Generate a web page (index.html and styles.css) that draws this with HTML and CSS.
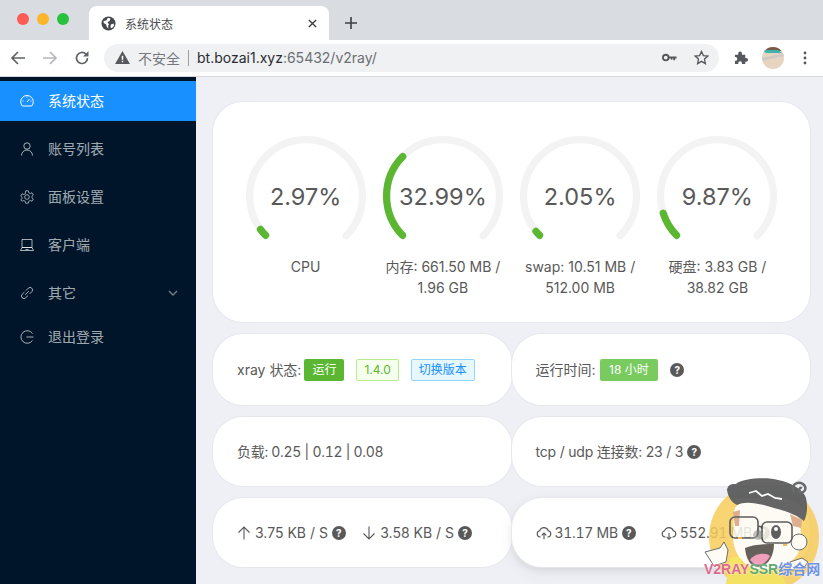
FILE: index.html
```html
<!DOCTYPE html>
<html lang="zh-CN">
<head>
    <meta charset="UTF-8">
    <meta name="viewport" content="width=device-width, initial-scale=1.0">
    <title>系统状态</title>
    <link rel="stylesheet" href="styles.css">
</head>
<body>
<div class="window">
    <div class="tab-strip">
        <div class="traffic">
            <span class="light red"></span>
            <span class="light yellow"></span>
            <span class="light green"></span>
        </div>
        <div class="tab">
            <svg class="favicon" viewBox="0 0 16 16"><circle cx="8" cy="8" r="7.5" fill="#45484c"/><path d="M2.5 5.5 6 4.5 7 2l3 .5-.5 2.5L7 6.500l1.500 2.500-1 1.500.5 3-2-2-.5-2.500L3 7.500zM10.500 9l3-1 .5 2.500-2.500 2.500-1.500-1z" fill="#fff"/></svg>
            <span class="tab-title">系统状态</span>
            <svg class="tab-close" viewBox="0 0 10 10"><path d="M1 1l8 8M9 1l-8 8" stroke="#3c4043" stroke-width="1.500"/></svg>
        </div>
        <svg class="new-tab" viewBox="0 0 12 12"><path d="M6 0v12M0 6h12" stroke="#3c4043" stroke-width="1.600"/></svg>
    </div>
    <div class="toolbar">
        <svg class="tool-icon" viewBox="0 0 16 16"><path d="M15 8H2M8 2 2 8l6 6" fill="none" stroke="#5f6368" stroke-width="1.700"/></svg>
        <svg class="tool-icon" viewBox="0 0 16 16"><path d="M1 8h13M8 2l6 6-6 6" fill="none" stroke="#b4b6b9" stroke-width="1.700"/></svg>
        <svg class="tool-icon" viewBox="0 0 16 16"><path d="M13.500 8a5.500 5.500 0 1 1-1.600-3.900" fill="none" stroke="#5f6368" stroke-width="1.700"/><path d="M14.500 1v5.500H9z" fill="#5f6368"/></svg>
        <div class="omnibox">
            <svg class="warn" viewBox="0 0 16 14"><path d="M8 0l8 14H0z" fill="#55585c"/><path d="M7.200 5h1.600v4.500H7.200zM7.200 10.500h1.600V12H7.200z" fill="#fff"/></svg>
            <span class="not-secure">不安全</span>
            <span class="divider"></span>
            <span class="url">bt.bozai1.xyz<span class="url-dim">:65432/v2ray/</span></span>
            <svg class="key" viewBox="0 0 16 9"><circle cx="4" cy="4.500" r="3" fill="none" stroke="#55585c" stroke-width="2"/><path d="M6.500 3.500H15.500V5.500H14V7.500H12V5.500H11V7H9.500V5.500H6.500z" fill="#55585c"/></svg>
            <svg class="star" viewBox="0 0 16 16"><path d="M8 1.500l2 4.500 4.800.5-3.600 3.200 1 4.800L8 12.100l-4.200 2.400 1-4.800L1.200 6.500 6 6z" fill="none" stroke="#55585c" stroke-width="1.400"/></svg>
        </div>
        <svg class="puzzle" viewBox="0 0 16 16"><path d="M1 5h3.500V3.500a2 2 0 0 1 4 0V5H12v3.500h1a2 2 0 0 1 0 4h-1V15H8.500v-1a2 2 0 0 0-4 0v1H1v-3.500h.5a2 2 0 0 0 0-4H1z" fill="#55585c"/></svg>
        <svg class="avatar" viewBox="0 0 22 22"><defs><clipPath id="avatar-clip"><circle cx="11" cy="11" r="11"/></clipPath></defs><g clip-path="url(#avatar-clip)"><rect width="22" height="22" fill="#e6d3c0"/><rect width="22" height="4" fill="#7a5a45"/><path d="M0 3h16l4 3H4z" fill="#3cb4ad"/><path d="M0 11 22 6v3L0 14z" fill="#cfcac6"/></g></svg>
        <svg class="dots" viewBox="0 0 4 14"><circle cx="2" cy="2" r="1.400"/><circle cx="2" cy="7" r="1.400"/><circle cx="2" cy="12" r="1.400"/></svg>
    </div>

    <div class="page">
        <nav class="sidebar">
            <a class="menu-item active">
                <svg class="menu-icon" viewBox="0 0 14 14"><path d="M2.300 12A6.300 6.300 0 1 1 11.700 12zM7 8l2.500-3" fill="none" stroke="currentColor"/><path d="M2.500 7h1M10.500 7h1M7 2.500v1" stroke="currentColor"/></svg>
                <span>系统状态</span>
            </a>
            <a class="menu-item">
                <svg class="menu-icon" viewBox="0 0 14 14"><circle cx="7" cy="4" r="3.200" fill="none" stroke="currentColor"/><path d="M1.500 13.500a5.500 5.500 0 0 1 11 0" fill="none" stroke="currentColor"/></svg>
                <span>账号列表</span>
            </a>
            <a class="menu-item">
                <svg class="menu-icon" viewBox="0 0 14 14"><path d="M5.700.8h2.600l.4 1.900 1.500.8 1.800-.7 1.300 2.300-1.400 1.200v1.400l1.400 1.200-1.300 2.300-1.800-.7-1.500.8-.4 1.900H5.700l-.4-1.900-1.500-.8-1.800.7L.7 9.900l1.400-1.200V7.300L.7 6.100 2 3.800l1.800.7 1.500-.8z" fill="none" stroke="currentColor" stroke-width=".9"/><circle cx="7" cy="7" r="2.300" fill="none" stroke="currentColor" stroke-width=".9"/></svg>
                <span>面板设置</span>
            </a>
            <a class="menu-item">
                <svg class="menu-icon" viewBox="0 0 14 14"><path d="M2 1.500h10v8H2zM.5 12.500l1.500-3h10l1.500 3z" fill="none" stroke="currentColor"/><path d="M5.500 11.500h3" stroke="currentColor"/></svg>
                <span>客户端</span>
            </a>
            <a class="menu-item">
                <svg class="menu-icon" viewBox="0 0 14 14"><path d="M6 4.500 8.300 2.200a2.400 2.400 0 0 1 3.500 3.500L9.500 8M8 9.500l-2.300 2.300a2.400 2.400 0 0 1-3.500-3.500L4.500 6M5.200 8.800l3.600-3.600" fill="none" stroke="currentColor"/></svg>
                <span>其它</span>
                <svg class="menu-arrow" viewBox="0 0 10 6"><path d="M1 1l4 4 4-4" fill="none" stroke="currentColor" stroke-width="1.400"/></svg>
            </a>
            <a class="menu-item">
                <svg class="menu-icon" viewBox="0 0 14 14"><path d="M12.500 3.500a6.300 6.300 0 1 0 0 7M6.500 7h7" fill="none" stroke="currentColor"/></svg>
                <span>退出登录</span>
            </a>
        </nav>

        <main class="content">
            <section class="card gauges">
                <div class="gauge-col">
                    <div class="gauge">
                        <svg viewBox="0 0 100 100">
                            <path class="trail" d="M50 97a47 47 0 1 1 0-94a47 47 0 1 1 0 94" stroke-dasharray="220.31 295.31" stroke-dashoffset="-37.5"/>
                            <path class="stroke" d="M50 97a47 47 0 1 1 0-94a47 47 0 1 1 0 94" stroke-dasharray="6.54 295.31" stroke-dashoffset="-37.5"/>
                        </svg>
                        <span class="gauge-text">2.97%</span>
                    </div>
                    <div class="gauge-label">CPU</div>
                </div>
                <div class="gauge-col">
                    <div class="gauge">
                        <svg viewBox="0 0 100 100">
                            <path class="trail" d="M50 97a47 47 0 1 1 0-94a47 47 0 1 1 0 94" stroke-dasharray="220.31 295.31" stroke-dashoffset="-37.5"/>
                            <path class="stroke" d="M50 97a47 47 0 1 1 0-94a47 47 0 1 1 0 94" stroke-dasharray="72.68 295.31" stroke-dashoffset="-37.5"/>
                        </svg>
                        <span class="gauge-text">32.99%</span>
                    </div>
                    <div class="gauge-label">内存: 661.50 MB /<br>1.96 GB</div>
                </div>
                <div class="gauge-col">
                    <div class="gauge">
                        <svg viewBox="0 0 100 100">
                            <path class="trail" d="M50 97a47 47 0 1 1 0-94a47 47 0 1 1 0 94" stroke-dasharray="220.31 295.31" stroke-dashoffset="-37.5"/>
                            <path class="stroke" d="M50 97a47 47 0 1 1 0-94a47 47 0 1 1 0 94" stroke-dasharray="4.52 295.31" stroke-dashoffset="-37.5"/>
                        </svg>
                        <span class="gauge-text">2.05%</span>
                    </div>
                    <div class="gauge-label">swap: 10.51 MB /<br>512.00 MB</div>
                </div>
                <div class="gauge-col">
                    <div class="gauge">
                        <svg viewBox="0 0 100 100">
                            <path class="trail" d="M50 97a47 47 0 1 1 0-94a47 47 0 1 1 0 94" stroke-dasharray="220.31 295.31" stroke-dashoffset="-37.5"/>
                            <path class="stroke" d="M50 97a47 47 0 1 1 0-94a47 47 0 1 1 0 94" stroke-dasharray="21.74 295.31" stroke-dashoffset="-37.5"/>
                        </svg>
                        <span class="gauge-text">9.87%</span>
                    </div>
                    <div class="gauge-label">硬盘: 3.83 GB /<br>38.82 GB</div>
                </div>
            </section>

            <div class="info-grid">
                <div class="card info">
                    <span class="info-label tag-gap">xray 状态:</span>
                    <span class="tag tag-green">运行</span>
                    <span class="tag tag-light">1.4.0</span>
                    <span class="tag tag-blue">切换版本</span>
                </div>
                <div class="card info">
                    <span class="info-label">运行时间:</span>
                    <span class="tag tag-uptime">18 小时</span>
                    <span class="help">?</span>
                </div>
                <div class="card info"><span class="info-label wide-digits">负载: 0.25 | 0.12 | 0.08</span></div>
                <div class="card info"><span class="info-label tight">tcp / udp 连接数: 23 / 3</span><span class="help">?</span></div>
                <div class="card info">
                    <div class="half">
                        <svg class="arrow" viewBox="0 0 14 14"><path d="M7 13.500V1M1.500 6.500 7 1l5.500 5.500" fill="none" stroke="#595959" stroke-width="1.100"/></svg>
                        <span class="info-label">3.75 KB / S</span><span class="help">?</span>
                    </div>
                    <div class="half">
                        <svg class="arrow" viewBox="0 0 14 14"><path d="M7 .5V13M1.500 7.500 7 13l5.500-5.500" fill="none" stroke="#595959" stroke-width="1.100"/></svg>
                        <span class="info-label">3.58 KB / S</span><span class="help">?</span>
                    </div>
                </div>
                <div class="card info hovered">
                    <div class="half">
                        <svg class="arrow cloud" viewBox="0 0 14 14"><path d="M4 10.500H3.500a2.800 2.800 0 0 1-.3-5.500 4 4 0 0 1 7.600 0 2.800 2.800 0 0 1-.3 5.500H10M7 12.500V7M5 9l2-2 2 2" fill="none" stroke="#595959" stroke-width="1"/></svg>
                        <span class="info-label wide-digits">31.17 MB</span><span class="help">?</span>
                    </div>
                    <div class="half">
                        <svg class="arrow cloud" viewBox="0 0 14 14"><path d="M4 10.500H3.500a2.800 2.800 0 0 1-.3-5.500 4 4 0 0 1 7.600 0 2.800 2.800 0 0 1-.3 5.500H10M7 7v5.500M5 10.500l2 2 2-2" fill="none" stroke="#595959" stroke-width="1"/></svg>
                        <span class="info-label wide-digits">552.91 MB</span><span class="help">?</span>
                    </div>
                </div>
            </div>
        </main>
    </div>
</div>

<div class="watermark">
    <svg viewBox="0 0 133 114">
        <circle cx="74" cy="67" r="55" fill="#f8cd5c"/>
        <path d="M36 114 40 88 60 84 90 100 96 114z" fill="#f5e04c"/>
        <path d="M44 42C44 24 100 24 108 44L112 68C112 90 92 100 76 100C58 100 44 88 43 68z" fill="#fdfbf2"/>
        <circle cx="109" cy="72" r="8" fill="#fdfbf2" stroke="#555" stroke-width="1"/>
        <path d="M43 42 50 40 49 56 45 56zM100 44 112 50 111 58 103 56z" fill="#d8a37c"/>
        <path d="M37 20C38 14 42 14 46 14 52 8 78 7 88 10 100 12 114 20 116 28 118 36 117 46 114 51 108 46 100 42 84 38 72 34 56 30 47 35 42 33 38 27 37 20z" fill="#4c4c4c"/>
        <path d="M104 23C100 14 108 11 113 14 118 18 114 24 110 22 108 20 110 17 112 18" fill="none" stroke="#555" stroke-width="2.500"/>
        <path d="M59 23 66 21 72 26 78 24 85 28 92 29" fill="none" stroke="#fff" stroke-width="1.800"/>
        <rect x="40" y="47" width="28" height="21" rx="5" fill="none" stroke="#444" stroke-width="1.600"/>
        <rect x="72" y="52" width="30" height="21" rx="5" fill="none" stroke="#444" stroke-width="1.600"/>
        <path d="M68 56 72 57" stroke="#444" stroke-width="1.600"/>
        <ellipse cx="86" cy="62" rx="5" ry="7" fill="#444"/>
        <circle cx="86" cy="59" r="2" fill="#fff"/>
        <circle cx="68" cy="65" r="5" fill="#8a8a86" opacity=".6"/>
        <path d="M48 68h4M93 75h4" stroke="#f2b13c" stroke-width="2"/>
        <path d="M55 78C64 74 76 74 84 74 84 88 76 97 68 97 60 97 56 88 55 78z" fill="#4d4640"/>
        <path d="M60 90C64 83 76 82 80 86 76 95 66 98 60 90z" fill="#ef8fb0"/>
        <path d="M15 82 30 78 34 72 38 80 36 92 24 96z" fill="#fdfbf2" stroke="#555" stroke-width="1"/>
        <path d="M100 92 112 88 118 92 112 100 100 100z" fill="#fdfbf2" stroke="#555" stroke-width="1"/>
    </svg>
    <div class="watermark-text"><span class="wm-pink">V2RAY</span><span class="wm-green">SSR</span><span class="wm-blue">综合网</span></div>
</div>
</body>
</html>
```
FILE: styles.css
```css
* {
    box-sizing: border-box;
}

html, body {
    margin: 0;
    padding: 0;
    width: 823px;
    height: 584px;
    overflow: hidden;
}

body {
    position: relative;
    font-family: Inter, "Noto Sans CJK SC", sans-serif;
    font-size: 14px;
    color: #595959;
    background: #eef0f5;
}

.window {
    display: flex;
    flex-direction: column;
    height: 100%;
}

/* browser chrome */
.tab-strip {
    display: flex;
    align-items: flex-end;
    height: 40px;
    background: #d9dce1;
}

.traffic {
    display: flex;
    gap: 8px;
    width: 89px;
    padding: 0 0 15px 17px;
}

.light {
    width: 12px;
    height: 12px;
    border-radius: 50%;
}

.light.red { background: #fb5c55; }
.light.yellow { background: #fdb52c; }
.light.green { background: #28c23f; }

.tab {
    display: flex;
    align-items: center;
    width: 240px;
    height: 34px;
    padding: 0 12px;
    background: #fff;
    border-radius: 8px 8px 0 0;
}

.favicon {
    width: 15px;
    height: 15px;
    margin-right: 9px;
}

.tab-title {
    flex: 1;
    font-size: 12px;
    color: #4a4d51;
}

.tab-close {
    width: 9px;
    height: 9px;
}

.new-tab {
    width: 12px;
    height: 12px;
    margin: 0 0 11px 16px;
}

.toolbar {
    display: flex;
    align-items: center;
    height: 37px;
    padding: 0 0 1px 10px;
    background: #fff;
    border-bottom: 1px solid #d5d7da;
}

.tool-icon {
    width: 16px;
    height: 16px;
    margin-right: 16px;
}

.omnibox {
    display: flex;
    align-items: center;
    width: 615px;
    height: 28px;
    margin-left: -2px;
    padding: 0 10px 0 11px;
    background: #eff1f3;
    border-radius: 14px;
}

.warn {
    width: 15px;
    height: 13px;
    margin-right: 8px;
}

.not-secure {
    color: #75787c;
}

.divider {
    width: 1px;
    height: 16px;
    margin: 0 8px;
    background: #9a9da1;
}

.url {
    flex: 1;
    color: #2a2c2f;
}

.url-dim {
    color: #6b6e72;
}

.key {
    width: 15px;
    height: 9px;
    margin-right: 17px;
}

.star {
    width: 15px;
    height: 15px;
}

.puzzle {
    width: 15px;
    height: 15px;
    margin-left: 15px;
}

.avatar {
    width: 22px;
    height: 22px;
    margin-left: 13px;
}

.dots {
    width: 4px;
    height: 14px;
    margin-left: 19px;
    fill: #55585c;
}

/* page layout */
.page {
    display: flex;
    flex: 1;
    min-height: 0;
}

.sidebar {
    flex: none;
    width: 196px;
    padding-top: 4px;
    background: #001529;
    color: rgba(255, 255, 255, 0.65);
}

.menu-item {
    display: flex;
    align-items: center;
    height: 40px;
    margin-bottom: 8px;
    padding: 0 18px 0 20px;
}

.menu-item span {
    margin-top: -2px;
}

.menu-item.active {
    background: #1890ff;
    color: #fff;
}

.menu-item:nth-child(5) {
    margin-bottom: 4px;
}

.menu-icon {
    width: 14px;
    height: 14px;
    margin-right: 14px;
}

.menu-arrow {
    width: 10px;
    height: 6px;
    margin-left: auto;
    opacity: .7;
}

.content {
    flex: 1;
    padding: 25px 13px 0 17px;
}

.card {
    background: #fff;
    border-radius: 30px;
    box-shadow: 0 0 0 1px #e6e8ec;
}

.gauges {
    display: grid;
    grid-template-columns: repeat(4, 1fr);
    height: 220px;
    padding: 34px 24px 24px;
}

.gauge-col {
    display: flex;
    flex-direction: column;
    align-items: center;
}

.gauge {
    position: relative;
    width: 120px;
    height: 120px;
}

.gauge svg {
    display: block;
    width: 120px;
    height: 120px;
}

.trail, .stroke {
    fill: none;
    stroke-width: 6;
    stroke-linecap: round;
}

.trail {
    stroke: #f3f3f3;
}

.stroke {
    stroke: #5bb731;
}

.gauge-text {
    position: absolute;
    top: 51%;
    left: 0;
    width: 100%;
    transform: translateY(-50%);
    text-align: center;
    font-size: 23.5px;
    line-height: 1;
}

.gauge-label {
    line-height: 21px;
    text-align: center;
    white-space: nowrap;
}

.info-grid {
    display: grid;
    grid-template-columns: minmax(0, 1fr) minmax(0, 1fr);
    row-gap: 12px;
    margin-top: 12px;
}

.info {
    display: flex;
    align-items: center;
    padding: 24px;
    line-height: 21px;
    white-space: nowrap;
}

.info-label {
    margin-right: 4px;
}

.tag-gap {
    margin-right: 3px;
}

.tight {
    letter-spacing: -0.2px;
}

/* Inter's narrow 1 runs short next to the original digits */
.wide-digits {
    font-variant-numeric: tabular-nums;
    letter-spacing: -0.3px;
}

.tag {
    height: 22px;
    margin: 1px 12px 0 0;
    padding: 0 7px;
    border: 1px solid transparent;
    border-radius: 2px;
    font-size: 12px;
    line-height: 19px;
}

.tag-green {
    background: #5bb731;
    color: #fff;
}

.tag-light {
    background: #f6ffed;
    border-color: #b7eb8f;
    color: #5bb731;
}

.tag-blue {
    background: #e6f7ff;
    border-color: #91d5ff;
    color: #1890ff;
}

.tag-uptime {
    padding: 0 8.5px;
    background: #79cb60;
    color: #fff;
}

.help {
    display: inline-block;
    flex: none;
    width: 14px;
    height: 14px;
    border-radius: 50%;
    background: #595959;
    color: #fff;
    font-size: 10px;
    font-weight: 700;
    line-height: 14px;
    text-align: center;
}

.half {
    display: flex;
    align-items: center;
    width: 50%;
}

.arrow {
    flex: none;
    width: 14px;
    height: 14px;
    margin-right: 4px;
}

.arrow.cloud {
    width: 16px;
    height: 16px;
    margin-right: 3px;
}

.hovered {
    box-shadow: 0 0 0 1px #e6e8ec, 0 3px 6px 0 rgba(0, 0, 0, 0.07), 0 5px 12px 4px rgba(0, 0, 0, 0.04);
}

/* watermark sits over the page */
.watermark {
    position: absolute;
    top: 470px;
    left: 690px;
    width: 133px;
    height: 114px;
}

.watermark svg {
    display: block;
    width: 133px;
    height: 114px;
    opacity: .86;
}

.watermark-text {
    position: absolute;
    top: 90px;
    left: 14px;
    font-family: "Liberation Sans", "Noto Sans CJK SC", sans-serif;
    font-size: 14px;
    font-weight: 700;
    line-height: 18px;
    white-space: nowrap;
    text-shadow: 0 0 2px #fff;
}

.wm-pink { color: #df6a8e; }
.wm-green { color: #62a873; }
.wm-blue { color: #6f92e4; }
```
